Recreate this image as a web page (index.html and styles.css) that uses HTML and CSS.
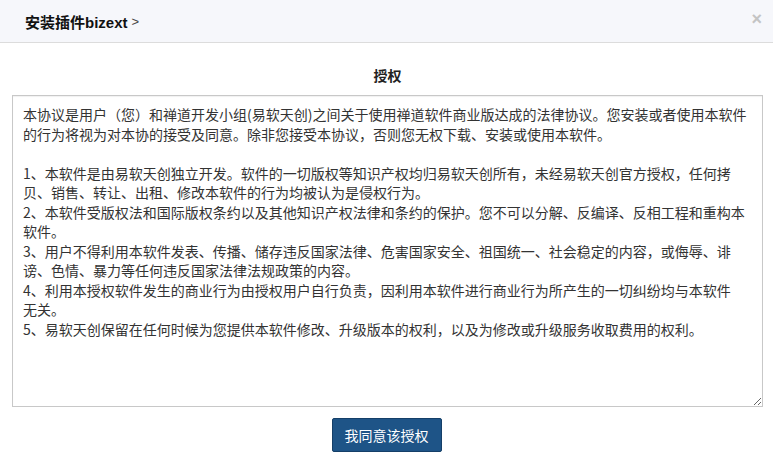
FILE: index.html
```html
<!DOCTYPE html>
<html>
<head>
    <meta charset="utf-8">
    <title>安装插件bizext</title>
    <link rel="stylesheet" href="styles.css">
</head>
<body>
    <div class="modal-header">
        <h3 class="modal-title">安装插件bizext<span class="arrow">&gt;</span></h3>
        <span class="close">&times;</span>
    </div>
    <div class="modal-body">
        <h4 class="lic-title">授权</h4>
        <textarea class="lic-text" readonly>本协议是用户（您）和禅道开发小组(易软天创)之间关于使用禅道软件商业版达成的法律协议。您安装或者使用本软件
的行为将视为对本协的接受及同意。除非您接受本协议，否则您无权下载、安装或使用本软件。

1、本软件是由易软天创独立开发。软件的一切版权等知识产权均归易软天创所有，未经易软天创官方授权，任何拷
贝、销售、转让、出租、修改本软件的行为均被认为是侵权行为。
2、本软件受版权法和国际版权条约以及其他知识产权法律和条约的保护。您不可以分解、反编译、反相工程和重构本
软件。
3、用户不得利用本软件发表、传播、储存违反国家法律、危害国家安全、祖国统一、社会稳定的内容，或侮辱、诽
谤、色情、暴力等任何违反国家法律法规政策的内容。
4、利用本授权软件发生的商业行为由授权用户自行负责，因利用本软件进行商业行为所产生的一切纠纷均与本软件
无关。
5、易软天创保留在任何时候为您提供本软件修改、升级版本的权利，以及为修改或升级服务收取费用的权利。</textarea>
        <div class="actions">
            <button class="btn-agree">我同意该授权</button>
        </div>
    </div>
</body>
</html>
```

FILE: styles.css
```css
*{margin:0;padding:0;box-sizing:border-box;}
body{background:#fff;color:#333;font-family:"Liberation Sans","Noto Sans CJK SC",sans-serif;font-size:14px;}

.modal-header{height:43px;background:#f6f7fb;border-bottom:1px solid #dcdcdc;
    display:flex;align-items:center;justify-content:space-between;padding:0 11px 0 25px;}
.modal-title{font-size:15px;font-weight:bold;color:#111;display:flex;align-items:center;}
.modal-title .arrow{font-weight:normal;font-size:13px;color:#444;margin-left:4px;}
.close{font-size:18px;color:#c4c4c4;font-weight:bold;line-height:1;margin-top:-4px;}

.modal-body{padding:0 10px 0 12px;}
.lic-title{text-align:center;font-size:14px;font-weight:bold;color:#222;line-height:20px;
    margin:23px 0 9px;}
.lic-text{display:block;width:751px;height:312px;border:1px solid #c8c8c8;
    padding:9px 2px 6px 10px;font-family:"Noto Sans CJK SC",sans-serif;font-size:14px;
    line-height:19.5px;color:#333;resize:both;outline:none;
    box-shadow:inset 0 1px 1px rgba(0,0,0,.06);}

.actions{display:flex;justify-content:center;padding-top:11px;margin-left:-2px;}
.btn-agree{width:110px;height:34px;background:#1e5487;border:1px solid #153f68;border-radius:2px;
    color:#fff;font-family:"Noto Sans CJK SC",sans-serif;font-size:14px;cursor:pointer;}
```
